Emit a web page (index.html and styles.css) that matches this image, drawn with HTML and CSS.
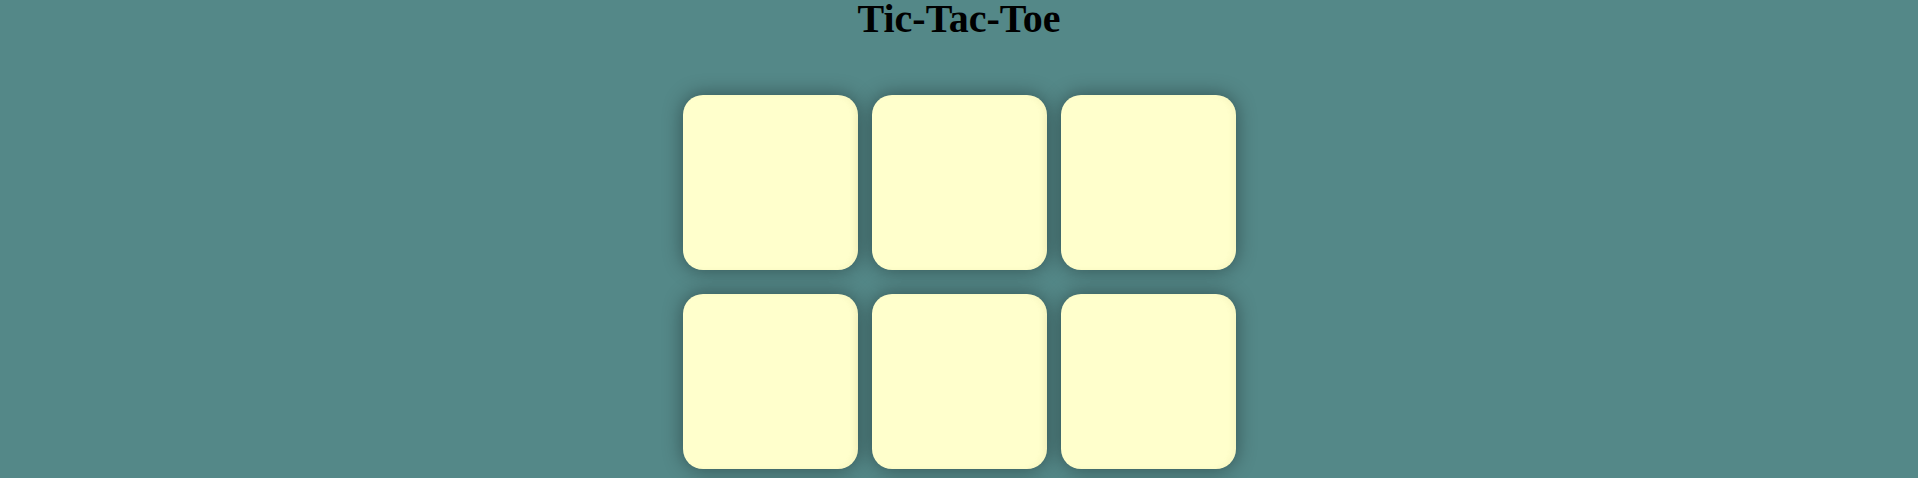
FILE: index.html
```html
<!DOCTYPE html>
<html>
<head>
<meta charset="utf-8">
<title>Tic-Tac-Toe</title>
<link rel="stylesheet" href="styles.css">
</head>
<body>
<h1 class="title">Tic-Tac-Toe</h1>
<div class="board">
  <div class="cell"></div>
  <div class="cell"></div>
  <div class="cell"></div>
  <div class="cell"></div>
  <div class="cell"></div>
  <div class="cell"></div>
  <div class="cell"></div>
  <div class="cell"></div>
  <div class="cell"></div>
</div>
</body>
</html>
```
FILE: styles.css
```css
html, body {
  margin: 0;
  padding: 0;
}
body {
  background: #548888;
  font-family: "Liberation Serif", "Times New Roman", serif;
  overflow: hidden;
  height: 478px;
}
.title {
  margin: 0;
  text-align: center;
  font-size: 40px;
  font-weight: bold;
  line-height: 38px;
  color: #000;
}
.board {
  display: grid;
  grid-template-columns: repeat(3, 175px);
  grid-auto-rows: 175px;
  column-gap: 14px;
  row-gap: 24px;
  justify-content: center;
  margin-top: 57px;
}
.cell {
  background: #ffffcc;
  border-radius: 20px;
  box-shadow: 0 0 20px rgba(0, 0, 0, 0.4), inset -4px 0 5px rgba(180, 170, 90, 0.08);
}
```
